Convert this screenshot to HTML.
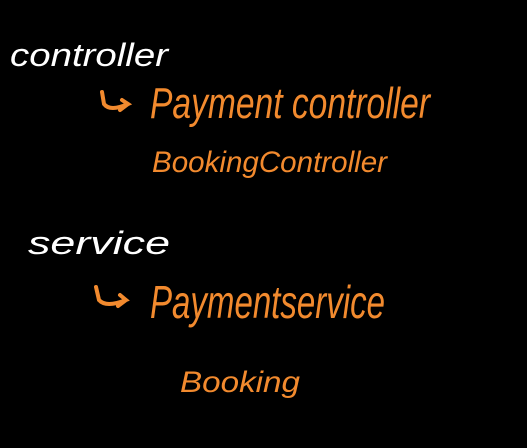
<!DOCTYPE html>
<html><head><meta charset="utf-8"><style>
html,body{margin:0;padding:0;background:#000;width:527px;height:448px;overflow:hidden}
svg{display:block}
text{font-family:"Liberation Sans",sans-serif;font-style:italic}
</style></head><body>
<svg width="527" height="448" viewBox="0 0 527 448">
<rect width="527" height="448" fill="#000"/>
<text x="10" y="66" font-size="32" fill="#fff" textLength="158" lengthAdjust="spacingAndGlyphs">controller</text>
<path d="M102 92 L104 104 Q110 112 128 104 L122 100 M128 104 L120 110" stroke="#f28a2e" stroke-width="4" fill="none" stroke-linecap="round"/>
<text x="150" y="118" font-size="44" fill="#f28a2e" textLength="280" lengthAdjust="spacingAndGlyphs">Payment controller</text>
<text x="152" y="172" font-size="30" fill="#f28a2e" textLength="235" lengthAdjust="spacingAndGlyphs">BookingController</text>
<text x="28" y="254" font-size="32" fill="#fff" textLength="142" lengthAdjust="spacingAndGlyphs">service</text>
<path d="M96 287 L99 300 Q106 308 126 300 L120 295 M126 300 L118 306" stroke="#f28a2e" stroke-width="4" fill="none" stroke-linecap="round"/>
<text x="150" y="318" font-size="46" fill="#f28a2e" textLength="235" lengthAdjust="spacingAndGlyphs">Paymentservice</text>
<text x="180" y="392" font-size="30" fill="#f28a2e" textLength="120" lengthAdjust="spacingAndGlyphs">Booking</text>
</svg>
</body></html>
